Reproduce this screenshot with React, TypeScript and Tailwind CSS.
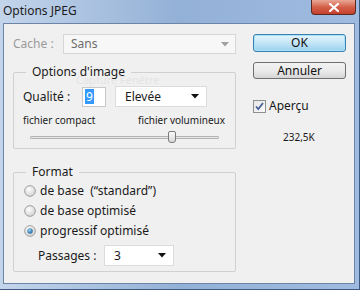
import React from "react";

const font = { fontFamily: '"Noto Sans", "Open Sans", "DejaVu Sans", sans-serif' };

function Arrow({ disabled }: { disabled?: boolean }) {
  return (
    <svg width="8" height="5" viewBox="0 0 8 5">
      <path d="M0 0h8L4 4.5z" fill={disabled ? "#a0a0a0" : "#111"} />
    </svg>
  );
}

function Radio({ checked }: { checked?: boolean }) {
  return (
    <svg width="12" height="12" viewBox="0 0 13 13" className="shrink-0">
      <defs>
        <radialGradient id="rg" cx="40%" cy="35%" r="70%">
          <stop offset="0%" stopColor="#ffffff" />
          <stop offset="100%" stopColor="#cfcfcf" />
        </radialGradient>
        <radialGradient id="rdot" cx="40%" cy="35%" r="70%">
          <stop offset="0%" stopColor="#8fd0f6" />
          <stop offset="100%" stopColor="#1b5f96" />
        </radialGradient>
      </defs>
      <circle cx="6.5" cy="6.5" r="5.8" fill="url(#rg)" stroke="#9a9a9a" strokeWidth="1" />
      {checked && <circle cx="6.5" cy="6.5" r="3" fill="url(#rdot)" />}
    </svg>
  );
}

function Select({ value, className }: { value: string; className: string }) {
  return (
    <div
      className={`flex items-center justify-between bg-white border border-[#dcdcdc] pl-[9px] pr-[7px] text-[12px] text-[#1a1a1a] ${className}`}
    >
      <span>{value}</span>
      <Arrow />
    </div>
  );
}

export default function App() {
  return (
    <div
      style={font}
      className="w-[360px] h-[290px] flex flex-col bg-gradient-to-r from-[#c3d5eb] via-[#93b0d6] to-[#9fbbe0] border-r border-b border-[#3f5a80]"
    >
      {/* title bar */}
      <div className="h-[23px] flex items-start justify-between shrink-0">
        <span className="pl-[3px] pt-[3px] text-[12px] text-[#1c1c1c] leading-[16px]">
          Options JPEG
        </span>
        <div className="mr-[3px] w-[45px] h-[15px] rounded-b-[4px] border border-t-0 border-[#5a2a22] bg-gradient-to-b from-[#e8a796] via-[#d4604a] to-[#c4412c] flex items-center justify-center">
          <svg width="10" height="9" viewBox="0 0 10 9">
            <path d="M1 1l8 7M9 1L1 8" stroke="#fff" strokeWidth="2.2" strokeLinecap="square" />
          </svg>
        </div>
      </div>

      {/* client area */}
      <div className="flex-1 ml-[3px] mr-[4px] mb-[5px] border border-[#6c84a6] bg-[#f0f0f0] flex pt-[10px] pl-[9px] relative">
        <span className="absolute left-[72px] top-[48px] text-[11px] text-[#e4e4e4] pointer-events-none">
          Capture Fenêtre
        </span>

        {/* left column */}
        <div className="w-[223px] flex flex-col">
          <div className="flex items-center h-[20px]">
            <span className="w-[50px] text-[12px] text-[#9a9a9a]">Cache :</span>
            <div className="flex-1 h-[20px] flex items-center justify-between border border-[#d6d6d6] bg-[#f7f7f7] pl-[7px] pr-[6px] text-[12px] text-[#6d6d6d]">
              <span>Sans</span>
              <Arrow disabled />
            </div>
          </div>

          <fieldset className="mt-[11px] border border-[#d0d0d0] rounded-[2px] h-[84px] px-[9px] relative">
            <legend className="ml-[3px] px-[6px] text-[12px] leading-[14px] text-[#1a1a1a]">
              Options d'image
            </legend>
            <div className="flex items-center mt-[7px] h-[21px]">
              <span className="w-[59px] text-[12px] text-[#1a1a1a]">Qualité :</span>
              <div className="w-[24px] h-[20px] bg-white border border-[#c8c8c8] flex items-center pl-[2px]">
                <span className="bg-[#3399ff] text-white text-[12px] leading-[15px] px-[1px]">9</span>
              </div>
              <Select value="Elevée" className="ml-[9px] w-[92px] h-[21px]" />
            </div>
            <div className="flex justify-between mt-[6px] text-[10px] leading-[14px] text-[#1a1a1a]">
              <span>fichier compact</span>
              <span className="mr-[1px]">fichier volumineux</span>
            </div>
            <div className="relative mt-[4px] mx-[7px] h-[12px] flex items-center">
              <div className="w-full h-[3px] border border-[#b4b4b4] bg-[#e6e6e6] rounded-[1px]" />
              <div className="absolute left-[138px] top-0 w-[8px] h-[12px] rounded-b-[3px] rounded-t-[2px] border border-[#7a7a7a] bg-gradient-to-b from-[#fafafa] to-[#d8d8d8]" />
            </div>
          </fieldset>

          <fieldset className="mt-[16px] border border-[#d0d0d0] rounded-[2px] h-[107px] px-[10px]">
            <legend className="ml-[2px] px-[6px] text-[12px] leading-[14px] text-[#1a1a1a]">
              Format
            </legend>
            <div className="flex flex-col mt-[2px] text-[12px] text-[#1a1a1a]">
              <label className="h-[20px] flex items-center gap-[4px]">
                <Radio />
                <span>de base&nbsp; (“standard”)</span>
              </label>
              <label className="h-[20px] flex items-center gap-[4px]">
                <Radio />
                <span>de base optimisé</span>
              </label>
              <label className="h-[20px] flex items-center gap-[4px]">
                <Radio checked />
                <span>progressif optimisé</span>
              </label>
              <div className="flex items-center mt-[4px] h-[21px] pl-[14px]">
                <span className="w-[66px]">Passages :</span>
                <Select value="3" className="w-[70px] h-[21px]" />
              </div>
            </div>
          </fieldset>
        </div>

        {/* right column */}
        <div className="ml-[17px] w-[93px] flex flex-col">
          <button className="h-[18px] rounded-[3px] border border-[#3c7fb1] bg-gradient-to-b from-[#e5f4fc] via-[#c4e5f6] to-[#98d1ef] text-[12px] leading-[14px] text-[#111] shadow-[inset_0_0_0_1px_#a9e3fb]">
            OK
          </button>
          <button className="mt-[10px] h-[17px] rounded-[3px] border border-[#707070] bg-gradient-to-b from-[#f2f2f2] via-[#ebebeb] to-[#d6d6d6] text-[12px] leading-[14px] text-[#111]">
            Annuler
          </button>
          <label className="mt-[18px] flex items-center gap-[3px] text-[12px] text-[#1a1a1a]">
            <span className="w-[13px] h-[13px] border border-[#8e8f8f] bg-gradient-to-br from-[#e6e6e6] to-[#fbfbfb] flex items-center justify-center">
              <svg width="9" height="9" viewBox="0 0 9 9">
                <path d="M1 4.5l2.3 2.6L8 1" stroke="#4a5f97" strokeWidth="1.8" fill="none" />
              </svg>
            </span>
            <span>Aperçu</span>
          </label>
          <span className="mt-[15px] pl-[30px] text-[10px] text-[#1a1a1a]">232,5K</span>
        </div>
      </div>
    </div>
  );
}
